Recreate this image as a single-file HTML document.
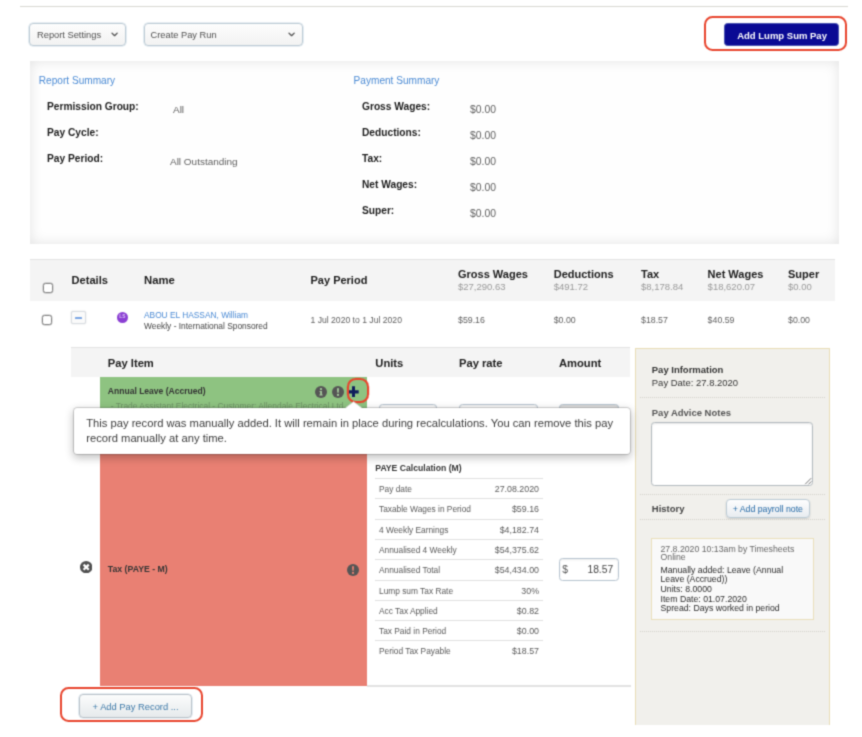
<!DOCTYPE html>
<html lang="en">
<head>
<meta charset="utf-8">
<title>Pay Run Report</title>
<style>
*{box-sizing:border-box;margin:0;padding:0}
html,body{width:862px;height:737px;background:#fff;overflow:hidden}
body{position:relative;font-family:"Liberation Sans",Arial,Helvetica,sans-serif;color:#444;-webkit-font-smoothing:antialiased}
#w{position:absolute;left:0;top:0;width:862px;height:737px;will-change:transform;background:#fff;filter:url(#soft)}
.a{position:absolute}
.t{position:absolute;white-space:nowrap;line-height:14px;height:14px}
.b{font-weight:700}
.r{text-align:right}
/* top rule */
#rule{left:20px;top:6px;width:828px;height:1px;background:#d8d8d2}
/* buttons */
.btn{position:absolute;border:1px solid #bccbd5;border-radius:4px;background:linear-gradient(#fdfdfd,#f2f2f2);box-shadow:0 0 0 .6px rgba(175,198,216,.55)}
.hl{position:absolute;border:2px solid #e8452e;border-radius:8.5px}
/* summary panel */
#panel{left:29.5px;top:60.5px;width:809px;height:183px;background:#fefefe;box-shadow:inset 0 0 13px rgba(0,0,0,.11)}
.lnk{color:#4a8ad4}
.s10{font-size:10.1px}
.lab{font-size:10.2px;font-weight:700;color:#1c1c1c;margin-top:.2px}
.val{font-size:10.4px;color:#606060}
/* table */
.band{position:absolute;background:#f4f4f4;border-top:1px solid #e3e3e3}
.th{font-size:11px;font-weight:700;color:#202020}
.sub{font-size:9.5px;color:#999}
.td{font-size:8.8px;color:#606060}
.cb{position:absolute;width:10.6px;height:10.6px;border:1px solid #858585;border-radius:2.6px;background:#fff;box-shadow:0 0 0 .4px rgba(120,120,120,.5)}
.inp{border:1px solid #b7c4d0;border-radius:3.5px;background:#fff;box-shadow:inset 0 1px 2px rgba(0,0,0,.08)}
.pl{left:375px;width:168px;height:1px;background:#e0e0e0}
.pk{left:379px;font-size:8.35px;color:#5a5a5a;margin-top:0}
.pv{left:439px;width:100px;text-align:right;font-size:8.85px;color:#5a5a5a;margin-top:0}
#side{left:634.5px;top:347.8px;width:195.2px;height:377px;background:#f1f0ec;border:1px solid #e9ddb6;border-bottom:none}
.dl{left:639.5px;width:185.5px;height:0;border-top:1px dotted #d3d1ca}
.hx{left:660.5px;font-size:8.73px;color:#2c2c2c}
#tip{left:72.8px;top:407px;width:557.9px;height:48px;background:#fff;border:1px solid rgba(0,0,0,.17);background-clip:padding-box;border-radius:4.5px;box-shadow:0 3px 9px rgba(0,0,0,.24)}
.tt{left:86.2px;font-size:11.21px;color:#3c3c3c}
</style>
</head>
<body>
<svg width="0" height="0" style="position:absolute" aria-hidden="true"><defs><filter id="soft" x="0" y="0" width="100%" height="100%" color-interpolation-filters="sRGB"><feConvolveMatrix order="3" kernelMatrix="0.0311 0.1141 0.0311 0.1141 0.4191 0.1141 0.0311 0.1141 0.0311" edgeMode="duplicate" preserveAlpha="false"/></filter></defs></svg>
<div id="w">
<div class="a" id="rule"></div>

<!-- toolbar -->
<div class="btn" style="left:29.3px;top:22.6px;width:97px;height:23.6px"></div>
<div class="t" style="left:37px;top:28px;font-size:9.3px;color:#505050">Report Settings</div>
<svg class="a" style="left:111.4px;top:32px" width="7.2" height="5.2" viewBox="0 0 8 6"><path d="M1 1.3 L4 4.2 L7 1.3" fill="none" stroke="#555" stroke-width="1.6" stroke-linecap="round" stroke-linejoin="round"/></svg>

<div class="btn" style="left:143.8px;top:22.6px;width:159.3px;height:23.6px"></div>
<div class="t" style="left:150.5px;top:28px;font-size:9.3px;color:#505050">Create Pay Run</div>
<svg class="a" style="left:288.1px;top:32px" width="7.2" height="5.2" viewBox="0 0 8 6"><path d="M1 1.3 L4 4.2 L7 1.3" fill="none" stroke="#555" stroke-width="1.6" stroke-linecap="round" stroke-linejoin="round"/></svg>

<div class="hl" style="left:703.8px;top:15.6px;width:142.8px;height:35.6px"></div>
<div class="a" style="left:724px;top:22.8px;width:115px;height:23.6px;background:#0a0a94;border-radius:3.5px;border:1px solid #4650b0"></div>
<div class="t b" style="left:737.2px;top:29px;font-size:9.5px;color:#fff">Add Lump Sum Pay</div>

<!-- summary panel -->
<div class="a" id="panel"></div>
<div class="t lnk s10" style="left:38.8px;top:73.9px">Report Summary</div>
<div class="t lnk s10" style="left:353.6px;top:73.9px">Payment Summary</div>

<div class="t lab" style="left:47px;top:100px">Permission Group:</div>
<div class="t lab" style="left:47px;top:126.2px">Pay Cycle:</div>
<div class="t lab" style="left:47px;top:152.1px">Pay Period:</div>
<div class="t val" style="left:173px;top:102.8px;font-size:9.97px">All</div>
<div class="t val" style="left:170px;top:154.8px;font-size:9.97px">All Outstanding</div>

<div class="t lab" style="left:362px;top:100px">Gross Wages:</div>
<div class="t lab" style="left:362px;top:126.2px">Deductions:</div>
<div class="t lab" style="left:362px;top:152.1px">Tax:</div>
<div class="t lab" style="left:362px;top:178.2px">Net Wages:</div>
<div class="t lab" style="left:362px;top:204.2px">Super:</div>
<div class="t val" style="left:470px;top:102.8px">$0.00</div>
<div class="t val" style="left:470px;top:128.8px">$0.00</div>
<div class="t val" style="left:470px;top:154.8px">$0.00</div>
<div class="t val" style="left:470px;top:180.8px">$0.00</div>
<div class="t val" style="left:470px;top:206.8px">$0.00</div>

<!-- main table header -->
<div class="band" style="left:29.5px;top:259px;width:805.5px;height:42px"></div>
<div class="cb" style="left:42.7px;top:282.7px"></div>
<div class="t th" style="left:71.5px;top:273px;font-size:11.1px">Details</div>
<div class="t th" style="left:144px;top:273px;font-size:11.3px">Name</div>
<div class="t th" style="left:310.5px;top:273px">Pay Period</div>
<div class="t th" style="left:458px;top:267.3px">Gross Wages</div>
<div class="t th" style="left:553.7px;top:267.3px">Deductions</div>
<div class="t th" style="left:641px;top:267.3px">Tax</div>
<div class="t th" style="left:707.6px;top:267.3px">Net Wages</div>
<div class="t th" style="left:788px;top:267.3px">Super</div>
<div class="t sub" style="left:458px;top:280px">$27,290.63</div>
<div class="t sub" style="left:553.7px;top:280px">$491.72</div>
<div class="t sub" style="left:641px;top:280px">$8,178.84</div>
<div class="t sub" style="left:707.6px;top:280px">$18,620.07</div>
<div class="t sub" style="left:788px;top:280px">$0.00</div>

<!-- main row -->
<div class="cb" style="left:41.8px;top:314.6px"></div>
<div class="a" style="left:71.3px;top:311.4px;width:14.8px;height:12.4px;border:1px solid #d9dde2;border-radius:2px;background:#fafafa;box-shadow:0 0 1.5px rgba(0,0,0,.18)"></div>
<div class="a" style="left:75.2px;top:317.3px;width:6.4px;height:1.4px;background:#7ba6e4;border-radius:.5px"></div>
<div class="a" style="left:117px;top:311.5px;width:11px;height:11px;border-radius:50%;background:#8b3fd3"></div>
<div class="t" style="left:117px;width:11px;text-align:center;top:310.2px;font-size:4.8px;color:#dcc6f5;font-weight:700;letter-spacing:.3px">LS</div>
<div class="t lnk" style="left:144px;top:308px;font-size:8.35px">ABOU EL HASSAN, William</div>
<div class="t" style="left:144px;top:319.4px;font-size:8.4px;color:#444">Weekly - International Sponsored</div>
<div class="t td" style="left:310.5px;top:313.4px;font-size:8.62px">1 Jul 2020 to 1 Jul 2020</div>
<div class="t td" style="left:458px;top:313.4px">$59.16</div>
<div class="t td" style="left:553.7px;top:313.4px">$0.00</div>
<div class="t td" style="left:641px;top:313.4px">$18.57</div>
<div class="t td" style="left:707.6px;top:313.4px">$40.59</div>
<div class="t td" style="left:788px;top:313.4px">$0.00</div>

<!-- detail sub-table -->
<div class="band" style="left:71.4px;top:347.3px;width:559px;height:30px"></div>
<div class="t th" style="left:107.8px;top:355.6px;font-size:11.2px">Pay Item</div>
<div class="t th" style="left:375.3px;top:355.6px;font-size:11.2px">Units</div>
<div class="t th" style="left:459px;top:355.6px;font-size:11.2px">Pay rate</div>
<div class="t th" style="left:559px;top:355.6px;font-size:11.2px">Amount</div>

<!-- green pay item -->
<div class="a" style="left:99.7px;top:377px;width:267px;height:78px;background:#8ec381"></div>
<div class="t b" style="left:107.8px;top:384px;font-size:8.56px;color:#333">Annual Leave (Accrued)</div>
<div class="t" style="left:110.8px;top:399.3px;font-size:8.44px;color:#6f9367">- Trade Assistant Electrical - Customer: Allendale Electrical Ltd</div>
<!-- red tax item -->
<div class="a" style="left:99.7px;top:454px;width:267px;height:231.5px;background:#e98073"></div>
<div class="t b" style="left:107.8px;top:561.5px;font-size:8.73px;color:#343434">Tax (PAYE - M)</div>

<!-- icons -->
<svg class="a" style="left:315px;top:386px" width="12" height="12" viewBox="0 0 12 12"><circle cx="6" cy="6" r="6" fill="#555"/><circle cx="6" cy="3.1" r="1.15" fill="#a9cfa0"/><path d="M4.6 5h2.3v3.6h.8v1H4.4v-1h.8V6h-.6z" fill="#a9cfa0"/></svg>
<svg class="a" style="left:331.5px;top:386px" width="12" height="12" viewBox="0 0 12 12"><circle cx="6" cy="6" r="6" fill="#555"/><path d="M5 2.2h2l-.3 4.6H5.3z" fill="#a9cfa0"/><circle cx="6" cy="8.9" r="1.1" fill="#a9cfa0"/></svg>
<svg class="a" style="left:348px;top:385.8px" width="11" height="11.6" viewBox="0 0 11 11" preserveAspectRatio="none"><path d="M4 0.3h3v3.7h3.7v3H7v3.7H4V7H0.3V4H4z" fill="#101d5c"/></svg>
<div class="hl" style="left:346.7px;top:377.5px;width:22.2px;height:25.4px;border-radius:8.8px;box-shadow:0 0 0 .3px rgba(232,69,46,.6)"></div>
<svg class="a" style="left:346.8px;top:564px" width="12" height="12" viewBox="0 0 12 12"><circle cx="6" cy="6" r="6" fill="#555"/><path d="M5 2.2h2l-.3 4.6H5.3z" fill="#e98073"/><circle cx="6" cy="8.9" r="1.1" fill="#e98073"/></svg>
<svg class="a" style="left:79.6px;top:561px" width="12.4" height="12.4" viewBox="0 0 12 12"><circle cx="6" cy="6" r="6" fill="#505050"/><path d="M3.5 3.5l5 5M8.5 3.5l-5 5" stroke="#fff" stroke-width="2.1" stroke-linecap="butt"/></svg>

<svg class="a" style="left:79.6px;top:407.5px" width="12.4" height="12.4" viewBox="0 0 12 12"><circle cx="6" cy="6" r="6" fill="#505050"/><path d="M3.5 3.5l5 5M8.5 3.5l-5 5" stroke="#fff" stroke-width="2.1" stroke-linecap="butt"/></svg>
<!-- inputs peeking above tooltip -->
<div class="a inp" style="left:379.4px;top:403.5px;width:58px;height:23px"></div>
<div class="a inp" style="left:459px;top:403.5px;width:79px;height:23px"></div>
<div class="a inp" style="left:558.6px;top:403.5px;width:60px;height:23px;background:#e4e4e4"></div>

<!-- PAYE calculation -->
<div class="t b" style="left:375.3px;top:461.4px;font-size:8.64px;color:#333">PAYE Calculation (M)</div>
<div class="a pl" style="top:478px"></div>
<div class="a pl" style="top:498.3px"></div>
<div class="a pl" style="top:518.6px"></div>
<div class="a pl" style="top:538.9px"></div>
<div class="a pl" style="top:559.2px"></div>
<div class="a pl" style="top:579.5px"></div>
<div class="a pl" style="top:599.8px"></div>
<div class="a pl" style="top:620.1px"></div>
<div class="a pl" style="top:640.4px"></div>
<div class="t pk" style="top:482px">Pay date</div><div class="t pv" style="top:482px">27.08.2020</div>
<div class="t pk" style="top:502.3px">Taxable Wages in Period</div><div class="t pv" style="top:502.3px">$59.16</div>
<div class="t pk" style="top:522.6px">4 Weekly Earnings</div><div class="t pv" style="top:522.6px">$4,182.74</div>
<div class="t pk" style="top:542.9px">Annualised 4 Weekly</div><div class="t pv" style="top:542.9px">$54,375.62</div>
<div class="t pk" style="top:563.2px">Annualised Total</div><div class="t pv" style="top:563.2px">$54,434.00</div>
<div class="t pk" style="top:583.5px">Lump sum Tax Rate</div><div class="t pv" style="top:583.5px">30%</div>
<div class="t pk" style="top:603.8px">Acc Tax Applied</div><div class="t pv" style="top:603.8px">$0.82</div>
<div class="t pk" style="top:624.1px">Tax Paid in Period</div><div class="t pv" style="top:624.1px">$0.00</div>
<div class="t pk" style="top:644.4px">Period Tax Payable</div><div class="t pv" style="top:644.4px">$18.57</div>

<div class="a inp" style="left:558.6px;top:557.5px;width:60.2px;height:23.2px"></div>
<div class="t" style="left:562.3px;top:562.8px;font-size:10.3px;color:#555">$</div>
<div class="t r" style="left:570px;width:43.2px;top:562.8px;font-size:10.3px;color:#444">18.57</div>

<div class="a" style="left:367px;top:685.4px;width:263.5px;height:1.4px;background:#e2e2e2"></div>

<!-- add pay record -->
<div class="hl" style="left:60.3px;top:687.4px;width:142.5px;height:34.2px"></div>
<div class="btn" style="left:79.3px;top:694.1px;width:112.5px;height:24px;background:linear-gradient(#fbfcfc,#e6eaec);border-color:#b9c2c9"></div>
<div class="t" style="left:92.6px;top:700px;font-size:9.35px;color:#3d79a8">+ Add Pay Record ...</div>

<!-- right info panel -->
<div class="a" id="side"></div>
<div class="t b" style="left:651.8px;top:362.5px;font-size:9.48px;color:#333">Pay Information</div>
<div class="t" style="left:651.8px;top:375.6px;font-size:9.48px;color:#333">Pay Date: 27.8.2020</div>
<div class="a dl" style="top:397px"></div>
<div class="t b" style="left:651.8px;top:405.7px;font-size:9.48px;color:#555">Pay Advice Notes</div>
<div class="a" style="left:651.4px;top:422px;width:162px;height:63.6px;background:#fff;border:1px solid #b3babf;border-radius:3.5px;box-shadow:inset 0 1px 2px rgba(0,0,0,.1)"></div>
<svg class="a" style="left:804px;top:476.5px" width="8" height="8" viewBox="0 0 8 8"><path d="M7.2 1.2L1.2 7.2M7.4 4.4L4.4 7.4" stroke="#666" stroke-width=".9" fill="none"/></svg>
<div class="a dl" style="top:493.5px"></div>
<div class="t b" style="left:651.8px;top:502px;font-size:9.48px;color:#444">History</div>
<div class="btn" style="left:726px;top:499.3px;width:83.5px;height:19px;background:linear-gradient(#fdfdfe,#e8ecf0);box-shadow:0 1px 2px rgba(0,0,0,.15)"></div>
<div class="t" style="left:732.7px;top:501.5px;font-size:8.75px;color:#2469a6">+ Add payroll note</div>
<div class="a dl" style="top:518.5px"></div>
<div class="a" style="left:651px;top:538px;width:162.5px;height:81.8px;background:#f9f9f9;border:1px solid #eadfbb"></div>
<div class="t hx" style="top:542px;color:#666">27.8.2020 10:13am by Timesheets</div>
<div class="t hx" style="top:550px;color:#666">Online</div>
<div class="t hx" style="top:562.5px">Manually added: Leave (Annual</div>
<div class="t hx" style="top:572.2px">Leave (Accrued))</div>
<div class="t hx" style="top:581.9px">Units: 8.0000</div>
<div class="t hx" style="top:591.6px">Item Date: 01.07.2020</div>
<div class="t hx" style="top:601.3px">Spread: Days worked in period</div>
<div class="a dl" style="top:630.7px"></div>

<!-- tooltip -->
<div class="a" id="tip"></div>
<svg class="a" style="left:345px;top:401.2px" width="17.2" height="7.4" viewBox="0 0 16 9" preserveAspectRatio="none"><path d="M0.5 8.5L8 0.8L15.5 8.5z" fill="#fff"/><path d="M0.5 8.2L8 0.8L15.5 8.2" fill="none" stroke="#d9d9d9" stroke-width=".8"/></svg>
<div class="t tt" style="top:415.9px">This pay record was manually added. It will remain in place during recalculations. You can remove this pay</div>
<div class="t tt" style="top:430.9px">record manually at any time.</div>

</div>
</body>
</html>
